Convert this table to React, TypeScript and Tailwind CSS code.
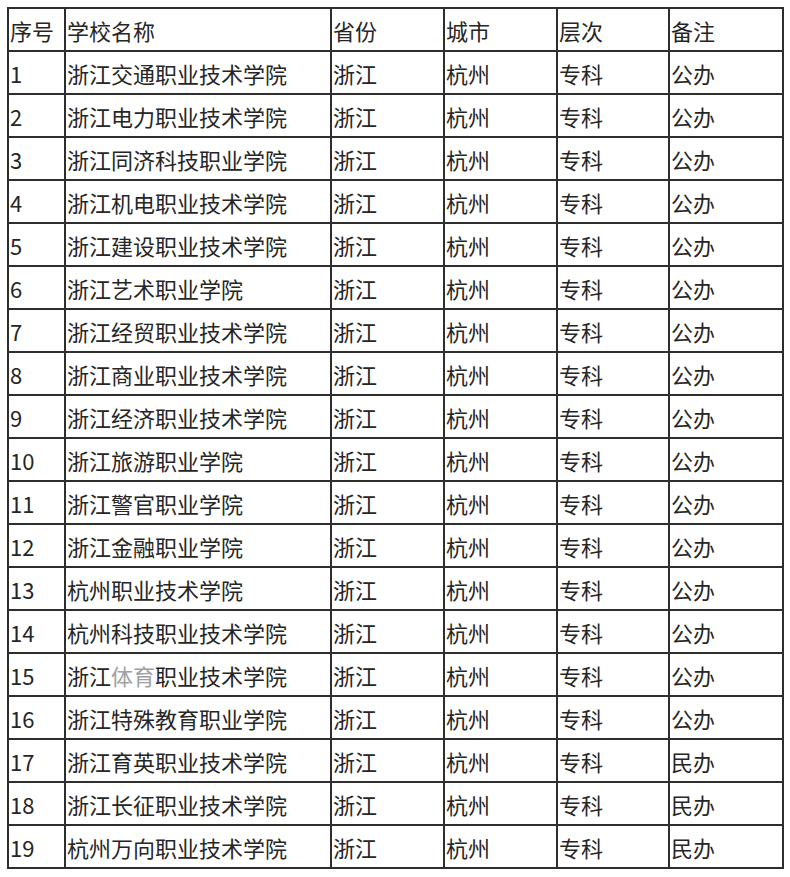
const header = ["序号", "学校名称", "省份", "城市", "层次", "备注"]

const schools = [
  "浙江交通职业技术学院",
  "浙江电力职业技术学院",
  "浙江同济科技职业学院",
  "浙江机电职业技术学院",
  "浙江建设职业技术学院",
  "浙江艺术职业学院",
  "浙江经贸职业技术学院",
  "浙江商业职业技术学院",
  "浙江经济职业技术学院",
  "浙江旅游职业学院",
  "浙江警官职业学院",
  "浙江金融职业学院",
  "杭州职业技术学院",
  "杭州科技职业技术学院",
  "浙江体育职业技术学院",
  "浙江特殊教育职业学院",
  "浙江育英职业技术学院",
  "浙江长征职业技术学院",
  "杭州万向职业技术学院",
]

const widths = ["w-[57px]", "w-[266px]", "w-[113px]", "w-[113px]", "w-[112px]", "w-[114px]"]

function SchoolName({ name }: { name: string }) {
  // row 15 has two faded characters in the source image
  if (name === "浙江体育职业技术学院") {
    return (
      <>
        浙江<span className="text-[#a0a0a0]">体育</span>职业技术学院
      </>
    )
  }
  return <>{name}</>
}

export default function App() {
  const cell = "border-2 border-[#2e2e2e] h-[43px] pl-[1px] pr-1 align-middle whitespace-nowrap"

  return (
    <div
      className="min-h-[877px] w-[790px] bg-white pl-[7px] pt-[7px] text-[#262626] text-[22px] leading-none"
      style={{ fontFamily: '"Noto Sans CJK SC", "Noto Sans", sans-serif' }}
    >
      <table className="table-fixed border-collapse w-[775px]">
        <colgroup>
          {widths.map((w, i) => (
            <col key={i} className={w} />
          ))}
        </colgroup>
        <thead>
          <tr>
            {header.map((h) => (
              <th key={h} className={`${cell} text-left font-normal`}>
                {h}
              </th>
            ))}
          </tr>
        </thead>
        <tbody>
          {schools.map((name, i) => (
            <tr key={name}>
              <td className={cell}>{i + 1}</td>
              <td className={cell}>
                <SchoolName name={name} />
              </td>
              <td className={cell}>浙江</td>
              <td className={cell}>杭州</td>
              <td className={cell}>专科</td>
              <td className={cell}>{i >= 16 ? "民办" : "公办"}</td>
            </tr>
          ))}
        </tbody>
      </table>
    </div>
  )
}
